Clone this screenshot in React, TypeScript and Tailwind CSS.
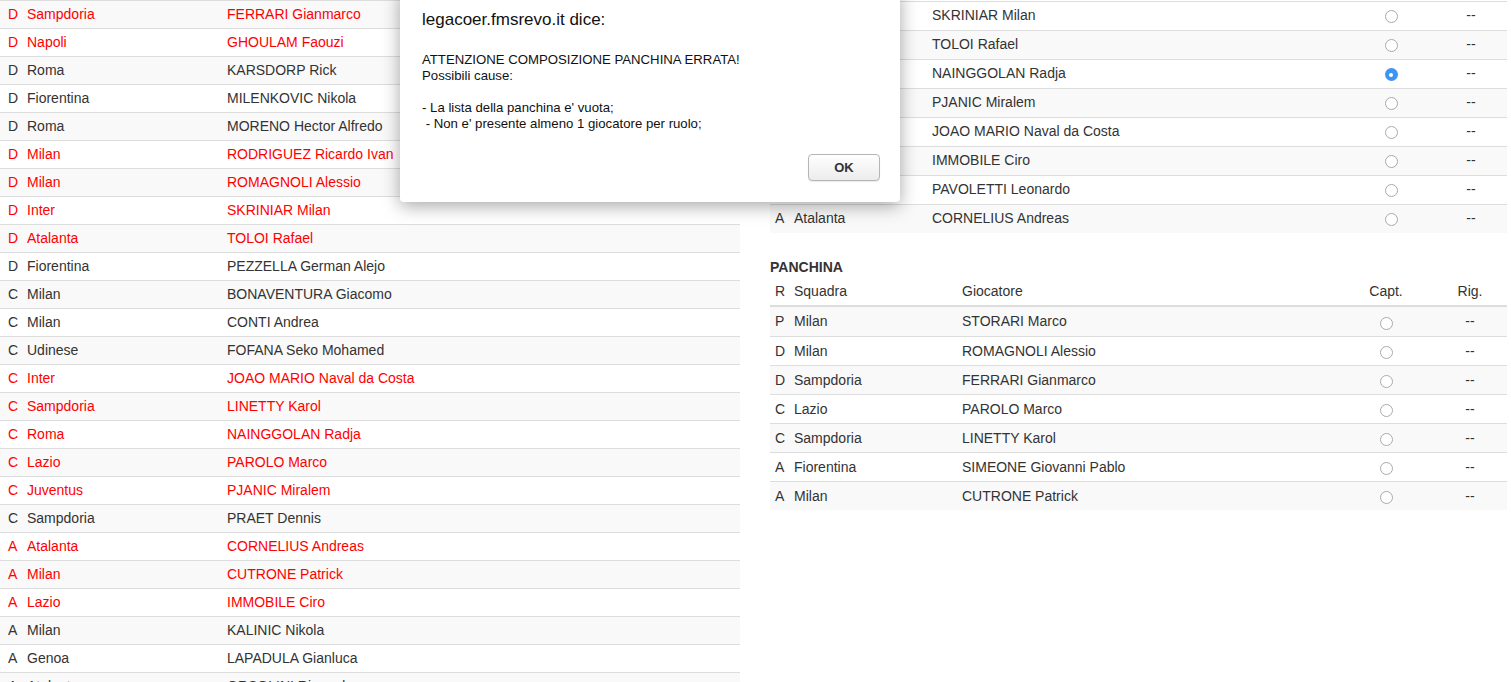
import React from "react";

type Row = { r: string; s: string; g: string; red?: boolean };

const leftRows: Row[] = [
  { r: "D", s: "Sampdoria", g: "FERRARI Gianmarco", red: true },
  { r: "D", s: "Napoli", g: "GHOULAM Faouzi", red: true },
  { r: "D", s: "Roma", g: "KARSDORP Rick" },
  { r: "D", s: "Fiorentina", g: "MILENKOVIC Nikola" },
  { r: "D", s: "Roma", g: "MORENO Hector Alfredo" },
  { r: "D", s: "Milan", g: "RODRIGUEZ Ricardo Ivan", red: true },
  { r: "D", s: "Milan", g: "ROMAGNOLI Alessio", red: true },
  { r: "D", s: "Inter", g: "SKRINIAR Milan", red: true },
  { r: "D", s: "Atalanta", g: "TOLOI Rafael", red: true },
  { r: "D", s: "Fiorentina", g: "PEZZELLA German Alejo" },
  { r: "C", s: "Milan", g: "BONAVENTURA Giacomo" },
  { r: "C", s: "Milan", g: "CONTI Andrea" },
  { r: "C", s: "Udinese", g: "FOFANA Seko Mohamed" },
  { r: "C", s: "Inter", g: "JOAO MARIO Naval da Costa", red: true },
  { r: "C", s: "Sampdoria", g: "LINETTY Karol", red: true },
  { r: "C", s: "Roma", g: "NAINGGOLAN Radja", red: true },
  { r: "C", s: "Lazio", g: "PAROLO Marco", red: true },
  { r: "C", s: "Juventus", g: "PJANIC Miralem", red: true },
  { r: "C", s: "Sampdoria", g: "PRAET Dennis" },
  { r: "A", s: "Atalanta", g: "CORNELIUS Andreas", red: true },
  { r: "A", s: "Milan", g: "CUTRONE Patrick", red: true },
  { r: "A", s: "Lazio", g: "IMMOBILE Ciro", red: true },
  { r: "A", s: "Milan", g: "KALINIC Nikola" },
  { r: "A", s: "Genoa", g: "LAPADULA Gianluca" },
  { r: "A", s: "Atalanta", g: "ORSOLINI Riccardo" },
];

const titolari: (Row & { sel?: boolean })[] = [
  { r: "D", s: "Inter", g: "SKRINIAR Milan" },
  { r: "D", s: "Atalanta", g: "TOLOI Rafael" },
  { r: "C", s: "Roma", g: "NAINGGOLAN Radja", sel: true },
  { r: "C", s: "Juventus", g: "PJANIC Miralem" },
  { r: "C", s: "Inter", g: "JOAO MARIO Naval da Costa" },
  { r: "A", s: "Lazio", g: "IMMOBILE Ciro" },
  { r: "A", s: "Cagliari", g: "PAVOLETTI Leonardo" },
  { r: "A", s: "Atalanta", g: "CORNELIUS Andreas" },
];

const panchina: Row[] = [
  { r: "P", s: "Milan", g: "STORARI Marco" },
  { r: "D", s: "Milan", g: "ROMAGNOLI Alessio" },
  { r: "D", s: "Sampdoria", g: "FERRARI Gianmarco" },
  { r: "C", s: "Lazio", g: "PAROLO Marco" },
  { r: "C", s: "Sampdoria", g: "LINETTY Karol" },
  { r: "A", s: "Fiorentina", g: "SIMEONE Giovanni Pablo" },
  { r: "A", s: "Milan", g: "CUTRONE Patrick" },
];

function Radio({ sel }: { sel?: boolean }) {
  if (sel) {
    return (
      <span className="mt-[3px] flex h-[13px] w-[13px] items-center justify-center rounded-full bg-[#3b95f5]">
        <span className="h-[4px] w-[4px] rounded-full bg-white" />
      </span>
    );
  }
  return (
    <span className="mt-[3px] block h-[13px] w-[13px] rounded-full border border-[#aaaaaa] bg-white" />
  );
}

export default function App() {
  return (
    <div
      className="relative h-[682px] w-[1511px] overflow-hidden bg-white text-[14px] text-[#333]"
      style={{ fontFamily: '"Liberation Sans", Arial, Helvetica, sans-serif' }}
    >
      <div className="flex gap-[30px]">
        {/* Left table */}
        <div className="w-[740px] shrink-0">
          {leftRows.map((row, i) => (
            <div
              key={i}
              className={`flex h-[28px] items-center border-t border-[#dddddd] ${
                i % 2 === 0 ? "bg-[#f9f9f9]" : "bg-white"
              } ${row.red ? "text-[#ff0000]" : "text-[#333]"}`}
            >
              <div className="w-[27px] pl-[8px]">{row.r}</div>
              <div className="w-[200px]">{row.s}</div>
              <div className="flex-1">{row.g}</div>
            </div>
          ))}
        </div>

        {/* Right column */}
        <div className="w-[737px] shrink-0 pt-px">
          {titolari.map((row, i) => (
            <div
              key={i}
              className={`flex h-[29px] items-center border-t border-[#dddddd] pb-[2px] ${
                i % 2 === 1 ? "bg-[#f9f9f9]" : "bg-white"
              }`}
            >
              <div className="w-[24px] pl-[5px]">{row.r}</div>
              <div className="w-[138px]">{row.s}</div>
              <div className="flex-1">{row.g}</div>
              <div className="flex w-[88px] justify-center">
                <Radio sel={row.sel} />
              </div>
              <div className="w-[72px] text-center">--</div>
            </div>
          ))}

          <div className="mt-[23px] h-[22px] text-[14px] font-bold leading-[22px]">PANCHINA</div>
          <div className="flex h-[29px] items-center border-b-2 border-[#dddddd]">
            <div className="w-[24px] pl-[5px]">R</div>
            <div className="w-[168px]">Squadra</div>
            <div className="flex-1">Giocatore</div>
            <div className="w-[94px] text-center">Capt.</div>
            <div className="w-[74px] text-center">Rig.</div>
          </div>
          {panchina.map((row, i) => (
            <div
              key={i}
              className={`flex h-[29px] items-center ${i > 0 ? "border-t border-[#dddddd]" : ""} ${
                i % 2 === 0 ? "bg-[#f9f9f9]" : "bg-white"
              }`}
            >
              <div className="w-[24px] pl-[5px]">{row.r}</div>
              <div className="w-[168px]">{row.s}</div>
              <div className="flex-1">{row.g}</div>
              <div className="flex w-[94px] justify-center">
                <Radio />
              </div>
              <div className="w-[74px] text-center">--</div>
            </div>
          ))}
        </div>
      </div>

      {/* Alert dialog */}
      <div className="absolute left-[400px] top-[-10px] h-[212px] w-[500px] rounded-b-[4px] bg-white shadow-[0_4px_18px_rgba(0,0,0,0.35)]">
        <div className="pl-[22px] pr-[20px] pt-[19px] text-[#111]">
          <div className="text-[17px] leading-[22px]">legacoer.fmsrevo.it dice:</div>
          <div className="mt-[21px] text-[13.2px] leading-[16px]">
            <div>ATTENZIONE COMPOSIZIONE PANCHINA ERRATA!</div>
            <div>Possibili cause:</div>
            <div className="h-[16px]" />
            <div>- La lista della panchina e' vuota;</div>
            <div>&nbsp;- Non e' presente almeno 1 giocatore per ruolo;</div>
          </div>
          <div className="mt-[22px] flex justify-end">
            <button className="h-[27px] w-[72px] rounded-[4px] border border-[#b5b5b5] bg-gradient-to-b from-white to-[#ececec] text-[13px] font-bold text-[#333] shadow-[0_1px_1px_rgba(0,0,0,0.08)]">
              OK
            </button>
          </div>
        </div>
      </div>
    </div>
  );
}
